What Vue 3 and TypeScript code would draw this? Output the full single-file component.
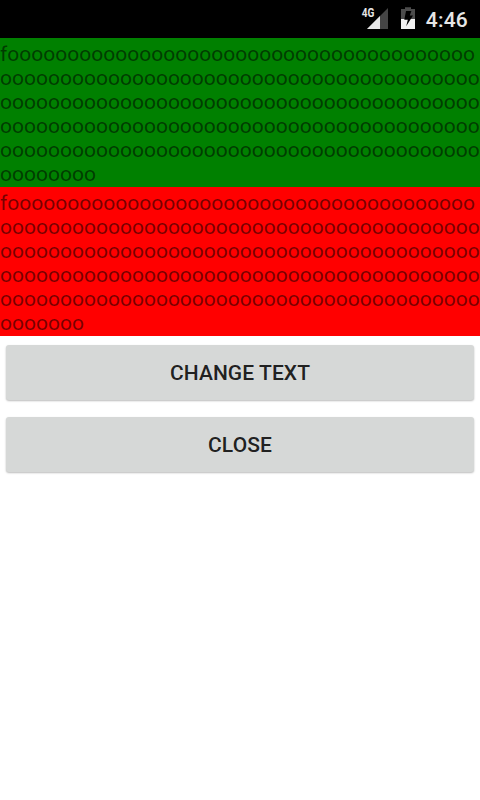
<script setup lang="ts">
import { computed, ref } from 'vue'

const PER_LINE = 40

function wrap(text: string): string[] {
  const lines: string[] = []
  for (let i = 0; i < text.length; i += PER_LINE) {
    lines.push(text.slice(i, i + PER_LINE))
  }
  return lines
}

const first = ref('f' + 'o'.repeat(207))
const second = ref('f' + 'o'.repeat(206))
const firstLines = computed(() => wrap(first.value))
const secondLines = computed(() => wrap(second.value))
</script>

<template>
  <div class="screen">
    <header class="status">
      <svg class="signal" width="28" height="24" viewBox="0 0 28 24">
        <path d="M27 0V21H6Z" fill="#454545" />
        <path d="M19 8V21H6Z" fill="#e6e6e6" />
        <text class="net" x="0.7" y="9.4" textLength="12.6" lengthAdjust="spacingAndGlyphs">4G</text>
      </svg>
      <svg class="battery" width="14" height="22" viewBox="0 0 14 22">
        <path d="M0 2H4V0.3H10V2H14V12H0Z" fill="#4c4c4c" />
        <path d="M0 12H14V22H0Z" fill="#f2f2f2" />
        <path d="M5 4H10.4L8.8 8.4H12L5.2 19.3L6.8 12.8H3.3Z" fill="#000" />
      </svg>
      <span class="clock">4:46</span>
    </header>
    <main>
      <p class="label green">
        <span v-for="(line, i) in firstLines" :key="i" class="line">{{ line }}</span>
      </p>
      <p class="label red">
        <span v-for="(line, i) in secondLines" :key="i" class="line">{{ line }}</span>
      </p>
      <div class="actions">
        <button type="button" class="btn">CHANGE TEXT</button>
        <button type="button" class="btn">CLOSE</button>
      </div>
    </main>
  </div>
</template>

<style>
body {
  background: #fff;
}
</style>

<style scoped>
.screen {
  width: 480px;
  height: 800px;
  overflow: hidden;
  background: #fff;
  font-family: Roboto, sans-serif;
}
.status {
  box-sizing: border-box;
  height: 38px;
  padding: 8px 12px 0 361px;
  display: flex;
  align-items: flex-start;
  background: #000;
}
.signal {
  flex: none;
  overflow: visible;
}
.net {
  fill: #e6e6e6;
  font: 700 12.5px Roboto, sans-serif;
}
.battery {
  flex: none;
  margin: -1px 0 0 12px;
}
.clock {
  margin-left: auto;
  color: #e6e6e6;
  font-size: 21px;
  font-weight: 500;
  line-height: 24px;
  letter-spacing: 0.2px;
}
.label {
  box-sizing: border-box;
  height: 149px;
  margin: 0;
  padding-top: 4px;
  overflow: hidden;
  color: rgba(0, 0, 0, 0.54);
  font-size: 21px;
  line-height: 24px;
  letter-spacing: 0.015px;
}
.line {
  display: block;
  white-space: nowrap;
}
.green {
  background: #008000;
}
.red {
  background: #f00;
}
.actions {
  display: flex;
  flex-direction: column;
  gap: 17px;
  padding: 9px 6px 0;
}
.btn {
  height: 55px;
  padding: 0;
  border: 0;
  border-radius: 3px;
  background: #d6d8d7;
  box-shadow: 0 1px 2px rgba(0, 0, 0, 0.27);
  color: rgba(0, 0, 0, 0.87);
  font: 500 21px/24px Roboto, sans-serif;
  letter-spacing: 0.08px;
}
</style>
